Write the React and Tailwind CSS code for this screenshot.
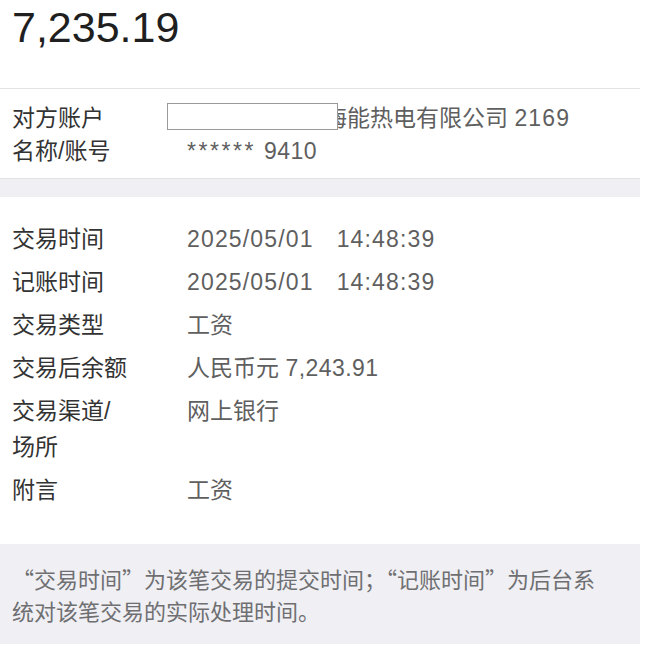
const rows = [
  { label: '交易时间', value: ['2025/05/01', '14:48:39'] },
  { label: '记账时间', value: ['2025/05/01', '14:48:39'] },
  { label: '交易类型', value: '工资' },
  { label: '交易后余额', value: ['人民币元', '7,243.91'], money: true },
  { label: ['交易渠道/', '场所'], value: '网上银行' },
  { label: '附言', value: '工资' },
];

const font = { fontFamily: '"Liberation Sans", "Noto Sans CJK SC", sans-serif' };
const cjkFirst = { fontFamily: '"Noto Sans CJK SC", "Liberation Sans", sans-serif' };

const Value = ({ value, money }) => {
  if (money) {
    return (
      <span>
        {value[0]} <span className="tracking-[0.02em]">{value[1]}</span>
      </span>
    );
  }
  if (Array.isArray(value)) {
    return (
      <span className="tracking-[0.05em]">
        {value[0]}
        <span className="ml-[23px]">{value[1]}</span>
      </span>
    );
  }
  return <span>{value}</span>;
};

const Label = ({ label }) => {
  if (Array.isArray(label)) {
    return (
      <span>
        {label[0]}
        <br />
        {label[1]}
      </span>
    );
  }
  return <span>{label}</span>;
};

export default function App() {
  return (
    <div className="min-h-[651px] w-[659px] bg-white" style={font}>
      <div className="w-[640px]">
        <div className="h-[89px] border-b border-[#e3e3e6] pl-[12px] pt-[3px]">
          <div className="text-[43px] leading-[48px] text-[#1f1f1f]">7,235.19</div>
        </div>

        <div className="relative pt-[13px] pb-[10px] text-[23px] leading-[33px]">
          <div className="grid grid-cols-[175px_1fr] pl-[12px]">
            <div className="text-[#333333]">对方账户</div>
            <div className="pl-[137px] text-[#5f5f5f]">
              海能热电有限公司 <span className="tracking-[0.05em]">2169</span>
            </div>
            <div className="text-[#333333]">名称/账号</div>
            <div className="text-[#5f5f5f]">
              <span className="tracking-[0.11em]">******</span>
              <span className="ml-[8px] tracking-[0.02em]">9410</span>
            </div>
          </div>
          <div className="absolute left-[167px] top-[14px] h-[27px] w-[171px] border border-[#9a9a9a] bg-white" />
        </div>

        <div className="h-[19px] border-t border-[#e3e3e6] bg-[#efeff4]" />

        <div className="flex flex-col gap-[7px] pt-[24px] pb-[36px] pl-[12px] text-[23px] leading-[36px]">
          {rows.map((r, i) => (
            <div key={i} className="grid grid-cols-[175px_1fr]">
              <div className="text-[#333333]">
                <Label label={r.label} />
              </div>
              <div className="text-[#5f5f5f]">
                <Value value={r.value} money={r.money} />
              </div>
            </div>
          ))}
        </div>

        <div
          className="bg-[#efeff4] px-[12px] pt-[18px] pb-[18px] text-[22px] leading-[32px] text-[#6f6f72]"
          style={cjkFirst}
        >
          “交易时间”为该笔交易的提交时间；“记账时间”为后台系
          <br />
          统对该笔交易的实际处理时间。
        </div>
      </div>
    </div>
  );
}
